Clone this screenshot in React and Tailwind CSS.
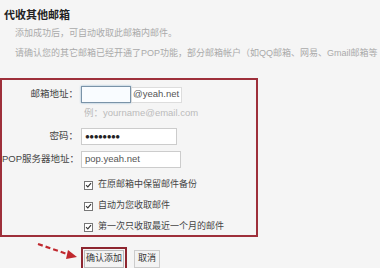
const Check = ({ label }) => (
  <div className="flex h-[14px] items-center">
    <span className="ml-[82px] flex h-[9px] w-[9px] items-center justify-center border border-[#777] bg-white">
      <svg viewBox="0 0 10 10" className="h-[8px] w-[8px]">
        <path d="M1.5 5.2 L4 7.6 L8.6 2.2" fill="none" stroke="#333" strokeWidth="1.6" />
      </svg>
    </span>
    <span className="ml-[5px] whitespace-nowrap text-[9px] text-[#444]">{label}</span>
  </div>
)

export default function App() {
  return (
    <div
      className="relative h-[268px] w-[380px] overflow-hidden bg-[#f5f5f5]"
      style={{ fontFamily: '"Liberation Sans", "Noto Sans CJK SC", sans-serif' }}
    >
      <div className="pl-[4px] pt-[7px] text-[11px] font-bold leading-[16px] text-[#222]">代收其他邮箱</div>
      <div className="mt-[4px] whitespace-nowrap pl-[15px] text-[9px] leading-[12px] text-[#aaa]">
        添加成功后，可自动收取此邮箱内邮件。
      </div>
      <div className="mt-[8px] whitespace-nowrap pl-[15px] text-[9px] leading-[12px] text-[#aaa]">
        请确认您的其它邮箱已经开通了POP功能，部分邮箱帐户（如QQ邮箱、网易、Gmail邮箱等
      </div>

      <div className="mt-[19px] w-[258px] border-2 border-[#9e2f3a] pt-[6px] pb-[1px] text-[9.5px] text-[#444]">
        <div className="flex h-[17px] items-center">
          <span className="w-[76px] whitespace-nowrap text-right">邮箱地址：</span>
          <span className="ml-[3px] h-[17px] w-[50px] border border-[#7a93a8] bg-[#f9fcff] shadow-[0_0_2px_#8fb3d0]" />
          <span className="flex h-[16px] w-[51px] items-center border border-[#ddd] bg-white pl-[1px] text-[9.5px] text-[#555]">
            @yeah.net
          </span>
        </div>
        <div className="ml-[82px] mt-[4px] h-[12px] whitespace-nowrap text-[9.5px] leading-[12px] text-[#bbb]">例：yourname@email.com</div>
        <div className="mt-[9px] flex h-[17px] items-center">
          <span className="w-[76px] whitespace-nowrap text-right">密码：</span>
          <span className="ml-[3px] flex h-[17px] w-[96px] items-center border border-[#ccc] bg-white pl-[3px] text-[8px] tracking-[-0.5px] text-[#222]">
            ●●●●●●●●
          </span>
        </div>
        <div className="mt-[6px] flex h-[17px] items-center">
          <span className="w-[76px] whitespace-nowrap text-right">POP服务器地址：</span>
          <span className="ml-[3px] flex h-[17px] w-[100px] items-center border border-[#ccc] bg-white pl-[3px] text-[9.5px] text-[#555]">
            pop.yeah.net
          </span>
        </div>
        <div className="mt-[10px] flex flex-col gap-[7px]">
          <Check label="在原邮箱中保留邮件备份" />
          <Check label="自动为您收取邮件" />
          <Check label="第一次只收取最近一个月的邮件" />
        </div>
      </div>

      <div className="mt-[10px] flex items-start">
        <span className="ml-[81px] border-2 border-[#8e2630] p-[1px]">
          <span className="flex h-[18px] items-center border border-[#bbb] bg-[#f3f3f3] px-px text-[9px] text-[#333]">确认添加</span>
        </span>
        <span className="ml-[7px] mt-[3px] flex h-[18px] items-center border border-[#ccc] bg-[#f3f3f3] px-[3px] text-[9px] text-[#333]">
          取消
        </span>
      </div>

      <svg className="absolute left-[36px] top-[240px] h-[22px] w-[44px]" viewBox="0 0 44 22">
        <path d="M2 4 L34 15" stroke="#c0282e" strokeWidth="2.2" strokeDasharray="5 3" fill="none" />
        <path d="M32 10 L41 17 L30 19 Z" fill="#c0282e" />
      </svg>
    </div>
  )
}
